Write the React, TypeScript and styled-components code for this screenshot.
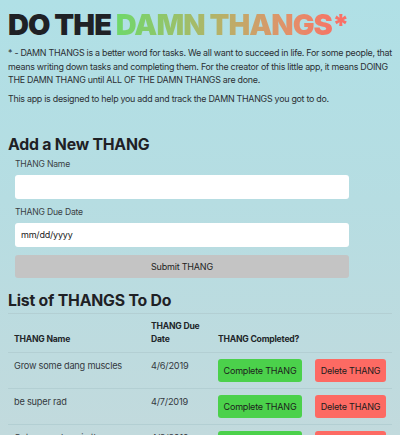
import React from "react";
import styled, { createGlobalStyle } from "styled-components";

const GlobalStyle = createGlobalStyle`
  html, body {
    margin: 0;
    padding: 0;
  }
  body {
    background: linear-gradient(180deg, #b0e0e6 0px, #b6dde2 200px, #c2dadd 435px);
    min-height: 435px;
    font-family: Inter, "Noto Sans", sans-serif;
    color: #2b2f33;
  }
`;

const Page = styled.main`
  padding: 10px 8px 8px 8px;
`;

const Title = styled.h1`
  margin: 0;
  font-size: 29px;
  line-height: 29px;
  font-weight: 900;
  color: #1f2125;
  letter-spacing: -0.95px;
  white-space: nowrap;
`;

const Gradient = styled.span`
  background: linear-gradient(90deg, #6fd86b 0%, #b7b168 45%, #e3906a 75%, #fd6b65 100%);
  -webkit-background-clip: text;
  background-clip: text;
  color: transparent;
`;

const Intro = styled.p<{ $gap?: number }>`
  margin: ${(p) => p.$gap ?? 0}px 0 0 0;
  font-size: 8.9px;
  letter-spacing: -0.27px;
  line-height: 13.7px;
  color: #2b2f33;
`;

const Heading = styled.h2<{ $top: number }>`
  margin: ${(p) => p.$top}px 0 0 0;
  font-size: 15.8px;
  letter-spacing: -0.2px;
  line-height: 20px;
  font-weight: 700;
  color: #1f2125;
`;

const Form = styled.form`
  display: flex;
  flex-direction: column;
  width: 334px;
  padding-left: 7px;
  margin-top: 3px;
`;

const Label = styled.label<{ $top: number }>`
  display: block;
  margin-top: ${(p) => p.$top}px;
  font-size: 8.6px;
  letter-spacing: -0.2px;
  line-height: 13px;
  color: #3a3f44;
`;

const Input = styled.input`
  box-sizing: border-box;
  margin-top: 4px;
  width: 100%;
  height: 24px;
  border: none;
  border-radius: 3px;
  background: #ffffff;
  padding: 0 6px;
  font-family: Inter, sans-serif;
  font-size: 9px;
  letter-spacing: -0.2px;
  color: #222;
  outline: none;
  &::placeholder {
    color: #222;
  }
`;

const SubmitButton = styled.button`
  margin-top: 8px;
  height: 23px;
  width: 100%;
  border: none;
  border-radius: 3px;
  background: #c4c4c4;
  font-family: Inter, sans-serif;
  font-size: 9px;
  letter-spacing: -0.2px;
  color: #1f1f1f;
`;

const Table = styled.table`
  margin-top: 2px;
  width: 384px;
  border-collapse: collapse;
  table-layout: fixed;
`;

const HeadCell = styled.th<{ $w: number }>`
  width: ${(p) => p.$w}px;
  box-sizing: border-box;
  text-align: left;
  vertical-align: bottom;
  padding: 6px 6px 6px 6px;
  border-top: 1px solid #b3cfd3;
  border-bottom: 1px solid #b3cfd3;
  font-size: 8.6px;
  letter-spacing: -0.2px;
  line-height: 13px;
  font-weight: 700;
  color: #22262a;
`;

const Cell = styled.td`
  vertical-align: top;
  padding: 6px 6px 6px 6px;
  border-bottom: 1px solid #b3cfd3;
  font-size: 9.2px;
  letter-spacing: -0.2px;
  line-height: 13px;
  color: #33383d;
`;

const ActionButton = styled.button<{ $kind: "complete" | "delete" }>`
  display: block;
  height: 23px;
  width: ${(p) => (p.$kind === "complete" ? 84 : 71)}px;
  border: none;
  border-radius: 3px;
  background: ${(p) => (p.$kind === "complete" ? "#4bd14b" : "#fd6a63")};
  font-family: Inter, sans-serif;
  font-size: 9px;
  letter-spacing: -0.2px;
  color: #1c1c1c;
  padding: 0;
  white-space: nowrap;
`;

const thangs = [
  { name: "Grow some dang muscles", date: "4/6/2019" },
  { name: "be super rad", date: "4/7/2019" },
  { name: "Get some sleep in the daytime", date: "4/8/2019" },
];

export default function App() {
  return (
    <>
      <GlobalStyle />
      <Page>
        <Title>
          DO THE <Gradient>DAMN THANGS*</Gradient>
        </Title>
        <Intro $gap={7}>
          * - DAMN THANGS is a better word for tasks. We all want to succeed in life. For some
          people, that means writing down tasks and completing them. For the creator of this
          little app, it means DOING THE DAMN THANG until ALL OF THE DAMN THANGS are done.
        </Intro>
        <Intro $gap={5}>
          This app is designed to help you add and track the DAMN THANGS you got to do.
        </Intro>

        <Heading $top={29}>Add a New THANG</Heading>
        <Form onSubmit={(e) => e.preventDefault()}>
          <Label $top={0}>THANG Name</Label>
          <Input type="text" />
          <Label $top={7}>THANG Due Date</Label>
          <Input type="text" placeholder="mm/dd/yyyy" />
          <SubmitButton type="submit">Submit THANG</SubmitButton>
        </Form>

        <Heading $top={13}>List of THANGS To Do</Heading>
        <Table>
          <thead>
            <tr>
              <HeadCell $w={137}>THANG Name</HeadCell>
              <HeadCell $w={67}>THANG Due Date</HeadCell>
              <HeadCell $w={97}>THANG Completed?</HeadCell>
              <HeadCell $w={83}></HeadCell>
            </tr>
          </thead>
          <tbody>
            {thangs.map((t) => (
              <tr key={t.name}>
                <Cell>{t.name}</Cell>
                <Cell>{t.date}</Cell>
                <Cell>
                  <ActionButton $kind="complete">Complete THANG</ActionButton>
                </Cell>
                <Cell>
                  <ActionButton $kind="delete">Delete THANG</ActionButton>
                </Cell>
              </tr>
            ))}
          </tbody>
        </Table>
      </Page>
    </>
  );
}
